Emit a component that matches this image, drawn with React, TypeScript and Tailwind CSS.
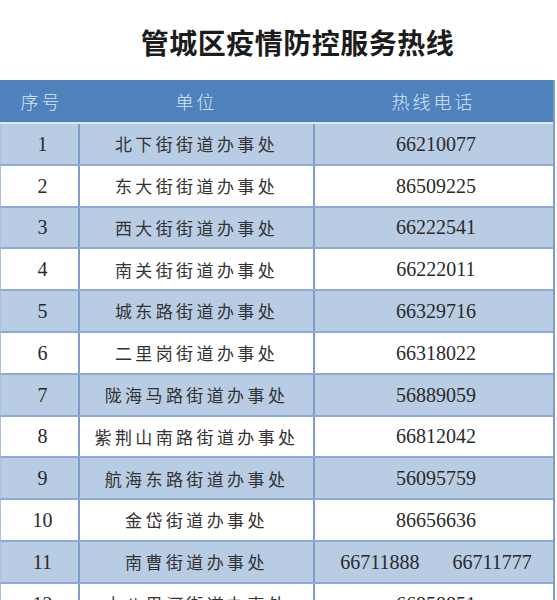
import React from "react";

const rows: { n: string; name: string; phone: string[] }[] = [
  { n: "1", name: "北下街街道办事处", phone: ["66210077"] },
  { n: "2", name: "东大街街道办事处", phone: ["86509225"] },
  { n: "3", name: "西大街街道办事处", phone: ["66222541"] },
  { n: "4", name: "南关街街道办事处", phone: ["66222011"] },
  { n: "5", name: "城东路街道办事处", phone: ["66329716"] },
  { n: "6", name: "二里岗街道办事处", phone: ["66318022"] },
  { n: "7", name: "陇海马路街道办事处", phone: ["56889059"] },
  { n: "8", name: "紫荆山南路街道办事处", phone: ["66812042"] },
  { n: "9", name: "航海东路街道办事处", phone: ["56095759"] },
  { n: "10", name: "金岱街道办事处", phone: ["86656636"] },
  { n: "11", name: "南曹街道办事处", phone: ["66711888", "66711777"] },
  { n: "12", name: "十八里河街道办事处", phone: ["66858851"] },
];

const cjk = "font-['Noto_Sans_CJK_SC',sans-serif]";
const num = "font-['Liberation_Serif','Noto_Sans_CJK_SC',serif]";

export default function App() {
  return (
    <div className="w-[557px] bg-white">
      <div className="h-[80px] flex items-center justify-center pl-[38px] pt-[4px]">
        <h1 className={`${cjk} text-[28px] font-bold text-[#1c1c1c] tracking-[0.5px]`}>
          管城区疫情防控服务热线
        </h1>
      </div>
      <div className="w-[555px] border-r-2 border-[#7f9dcc]">
        <div className="grid grid-cols-[79px_235px_1fr] h-[44px] bg-[#4f81bd] items-center text-[#dce6f4] border-b-2 border-[#dfe8f4]">
          <div className={`${cjk} text-[18px] font-light text-center pl-[4px] tracking-[3px]`}>序号</div>
          <div className={`${cjk} text-[18px] font-light text-center tracking-[3px]`}>单位</div>
          <div className={`${cjk} text-[18px] font-light text-center tracking-[3px]`}>热线电话</div>
        </div>
        {rows.map((r, i) => (
          <div
            key={r.n}
            className={`grid grid-cols-[79px_235px_1fr] h-[41.8px] items-center text-[#2a2a2a] border-b-2 border-[#8faad6] border-l border-l-[#a9c0e0] ${
              i % 2 === 0 ? "bg-[#b8cce4]" : "bg-white"
            }`}
          >
            <div className={`${num} text-[20px] text-center pl-[6px] h-full flex items-center justify-center border-r-2 border-[#7f9dcc]`}>
              {r.n}
            </div>
            <div className={`${cjk} text-[17px] text-center tracking-[3.4px] h-full flex items-center justify-center border-r-2 border-[#7f9dcc] text-[#333]`}>
              {r.name}
            </div>
            <div className={`${num} text-[20px] h-full flex items-center justify-center gap-[33px] pl-[4px]`}>
              {r.phone.map((p) => (
                <span key={p}>{p}</span>
              ))}
            </div>
          </div>
        ))}
      </div>
    </div>
  );
}
